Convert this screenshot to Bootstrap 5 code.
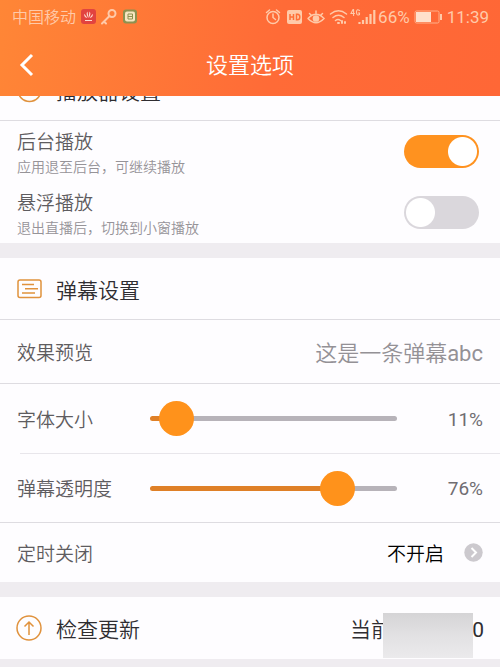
<!DOCTYPE html>
<html lang="zh-CN">
<head>
<meta charset="utf-8">
<meta name="viewport" content="width=device-width, initial-scale=1">
<title>设置选项</title>
<link href="https://cdn.jsdelivr.net/npm/bootstrap@5.3.0/dist/css/bootstrap.min.css" rel="stylesheet">
<style>
body{font-family:Roboto,"Noto Sans CJK SC",sans-serif;font-weight:350;background:#efecf0;color:#5e5c60;overflow-x:hidden}
.topbar{background:linear-gradient(100deg,#ff8636,#ff6b37 55%,#ff6736);color:#fff}
.status{height:34px;padding:0 11px 0 12px;color:#ffcaa9;font-size:16px;line-height:34px}
.status-cn{padding-top:2px}
.status-num{font-size:17px;font-weight:400}
.titlebar{height:62px;padding-top:2px}
.titlebar h1{font-size:22px;font-weight:350;line-height:60px}
.back{width:54px;height:60px}
.panel{background:#fefdff}
.scrolled{margin-top:-37px}
.line-row{padding:0 17px;border-bottom:1px solid #dedce1}
.head-row{height:62px;font-size:20px;color:#2f2d31;gap:14px}
.head-row h2{font-size:21px;font-weight:350;line-height:30px;padding-top:4px}
.opt{height:61px;padding:4px 17px 0}
.opt-name{font-size:19px;line-height:27px;padding-top:1px}
.opt-note{font-size:14px;line-height:23px;color:#969398}
.name{font-size:19px;line-height:28px;padding-top:4px;width:115px}
.preview-row{height:64px}
.preview{font-size:22px;line-height:30px;padding-top:4px;color:#949196}
.latin{font-weight:400}
.slide-row{height:69px;padding:0 17px}
.inset-line{margin-left:20px;height:1px;background:#e8e6eb}
.val{width:68px;font-size:19px;line-height:28px;padding-top:2px;font-weight:400;color:#706d72}
.slider{display:grid;align-items:center}
.slider::before{content:"";grid-area:1/1;height:5px;border-radius:3px;margin:0 18px;background:linear-gradient(90deg,#df8027 var(--v),#b7b3b9 var(--v))}
.slider input{grid-area:1/1;appearance:none;-webkit-appearance:none;background:transparent;width:100%;height:36px;margin:0}
.slider input::-webkit-slider-thumb{-webkit-appearance:none;width:35px;height:35px;border:0;border-radius:50%;background:#ff921b}
.slider input::-moz-range-thumb{width:35px;height:35px;border:0;border-radius:50%;background:#ff921b}
.toggle.form-switch{padding:0;margin:0 4px 4px 0;min-height:0}
.toggle .form-check-input{width:75px;height:33px;margin:0;float:none;display:block;border:0;background-color:#dad7dc;background-size:33px 33px;background-image:radial-gradient(circle,#fff 14px,transparent 15px);background-repeat:no-repeat;background-position:left center}
.toggle .form-check-input:checked{background-color:#ff921f;background-position:right center;background-image:radial-gradient(circle,#fff 14px,transparent 15px)}
.timer-row{height:59px;padding:0 17px}
.timer-val{font-size:19px;font-weight:350;color:#000;gap:20px}
.timer-text{line-height:28px;padding-top:4px}
.gap-band{height:15px}
.ver{font-size:21px;line-height:30px;width:134px;padding-top:4px}
.cover{top:2px;left:33px;right:11px;height:45px;background:linear-gradient(#d5d4d6,#e2e1e3 50%,#ebeaec)}
</style>
<script src="https://cdn.jsdelivr.net/npm/bootstrap@5.3.0/dist/js/bootstrap.bundle.min.js"></script>
</head>
<body>
<header class="topbar position-relative z-1">
  <div class="status d-flex align-items-center justify-content-between">
    <div class="d-flex align-items-center gap-1">
      <span class="status-cn">中国移动</span>
      <svg width="58" height="18" viewBox="0 0 58 18" aria-hidden="true">
        <rect x="1" y="1" width="15" height="15" rx="3" fill="#e2433f"/>
        <g fill="#ffd9cd"><path d="M8 9.500Q5.500 5.500 7.500 3.500L8.400 9.500ZM9 9.500Q11.500 5.500 9.500 3.500L8.600 9.500Z"/><path d="M7.400 10Q3.500 9 4.300 5.700ZM9.600 10Q13.500 9 12.700 5.700Z"/><rect x="5" y="12" width="7" height="1"/></g>
        <g fill="none" stroke="#ffcaa9" stroke-width="2" stroke-linecap="round"><circle cx="32" cy="5.500" r="3.500"/><path d="M29.500 8 22 15.500M24 13.500l2 2"/></g>
        <rect x="43" y="1.500" width="14" height="14" rx="3" fill="#8d9150"/>
        <rect x="45" y="3.500" width="10" height="10" rx="2" fill="#f7e6c2"/>
        <path d="M48 6h4.500v5H48zM48 8.500h4.500" stroke="#8d9150" fill="none"/>
      </svg>
    </div>
    <div class="d-flex align-items-center">
      <svg width="113" height="20" viewBox="0 0 113 20" fill="none" stroke="#ffcaa9" stroke-width="1.500" stroke-linecap="round" aria-hidden="true">
        <circle cx="8" cy="10.500" r="6"/><path d="M8 7V10.500l2.500 2M1.500 5.500 4.500 3M14.500 5.500l-3-2.500"/>
        <rect x="22" y="3" width="15" height="14" rx="2" fill="#ffcaa9" stroke="none"/>
        <path d="M25 7v6M28.500 7v6M25 10h3.500M31.500 7.200v5.600h1q2.300 0 2.300-2.800t-2.300-2.800z" stroke="#ff6f37" stroke-linecap="butt"/>
        <path d="M43 11.500q8-8.500 16 0-8 8.500-16 0M44.500 6.500l2 2M51 4v3M57.500 6.500l-2 2"/><circle cx="51" cy="11.500" r="2.600" fill="#ffcaa9"/>
        <path d="M65.500 7q8-6.500 16 0M68 10.500q5.500-4.500 11 0M70.500 13.500q2.500-2 5 0"/>
        <path d="M73 16h1M77 14v2M80 15v1" stroke-width="2"/>
        <path d="M88 2.500l-2 4h3.500M88.600 2.500v6M94.500 3.500q-2.500-2-3 1v1.500q.5 3 3 1.500V6h-1.200" stroke-width="1.100"/>
        <path d="M94.500 17v-2M98 17v-4M101.700 17v-7M105.500 17V7M109.300 17V3" stroke-width="2.200" stroke-linecap="butt"/>
      </svg>
      <span class="status-num">66%</span>
      <svg class="ms-1 me-1" width="29" height="16" viewBox="0 0 29 16" aria-hidden="true">
        <rect x="1" y="2" width="24" height="12" rx="1.500" fill="none" stroke="#ffb18a"/><rect x="2" y="3" width="15" height="10" fill="#ffe0cb"/><path d="M27 5v6" stroke="#ffcaa9" stroke-width="2"/>
      </svg>
      <span class="status-num">11:39</span>
    </div>
  </div>
  <div class="titlebar d-flex align-items-center">
    <button type="button" class="back btn p-0 border-0" aria-label="返回">
      <svg width="54" height="40" viewBox="0 0 54 40" fill="none" stroke="#fff" stroke-width="3"><path d="M32 9 22 19l10 10"/></svg>
    </button>
    <h1 class="flex-fill text-center m-0">设置选项</h1>
    <div class="back"></div>
  </div>
</header>
<main>
  <section class="panel">
    <div class="scrolled line-row head-row d-flex align-items-center">
      <svg width="25" height="26" viewBox="0 0 25 26" fill="none" stroke="#e0923d" stroke-width="1.500" aria-hidden="true"><circle cx="12.500" cy="13" r="11.500"/><path d="M10 7l6 4-6 4z"/></svg>
      <h2 class="m-0">播放器设置</h2>
    </div>
    <div class="opt d-flex align-items-center justify-content-between">
      <label for="bg"><span class="opt-name d-block">后台播放</span><span class="opt-note d-block">应用退至后台，可继续播放</span></label>
      <div class="toggle form-check form-switch"><input class="form-check-input" type="checkbox" role="switch" id="bg" checked></div>
    </div>
    <div class="opt d-flex align-items-center justify-content-between">
      <label for="float"><span class="opt-name d-block">悬浮播放</span><span class="opt-note d-block">退出直播后，切换到小窗播放</span></label>
      <div class="toggle form-check form-switch"><input class="form-check-input" type="checkbox" role="switch" id="float"></div>
    </div>
  </section>
  <div class="gap-band"></div>
  <section class="panel">
    <div class="line-row head-row d-flex align-items-center">
      <svg width="25" height="20" viewBox="0 0 25 20" fill="none" stroke="#e0923d" stroke-width="1.500" aria-hidden="true"><rect x="1" y="1" width="23" height="17.500" rx="2"/><path d="M5 5.500h12M8 9.800h13M5 14h13"/></svg>
      <h2 class="m-0">弹幕设置</h2>
    </div>
    <div class="line-row preview-row d-flex align-items-center justify-content-between">
      <span class="name">效果预览</span><span class="preview">这是一条弹幕<span class="latin">abc</span></span>
    </div>
    <div class="slide-row d-flex align-items-center">
      <label class="name" for="size">字体大小</label>
      <div class="slider flex-fill" style="--v:11%"><input type="range" id="size" min="0" max="100" value="11"></div>
      <output class="val text-end" for="size">11%</output>
    </div>
    <div class="inset-line"></div>
    <div class="line-row slide-row d-flex align-items-center">
      <label class="name" for="alpha">弹幕透明度</label>
      <div class="slider flex-fill" style="--v:76%"><input type="range" id="alpha" min="0" max="100" value="76"></div>
      <output class="val text-end" for="alpha">76%</output>
    </div>
    <div class="timer-row d-flex align-items-center justify-content-between">
      <span class="name">定时关闭</span>
      <button type="button" class="timer-val btn p-0 border-0 d-flex align-items-center"><span class="timer-text">不开启</span>
        <svg width="19" height="19" viewBox="0 0 19 19" aria-hidden="true"><circle cx="9.500" cy="9.500" r="9.200" fill="#ccc9ce"/><path d="M7.500 5l4.500 4.500L7.500 14" fill="none" stroke="#fff" stroke-width="2"/></svg>
      </button>
    </div>
  </section>
  <div class="gap-band"></div>
  <section class="panel">
    <div class="head-row px-3 d-flex align-items-center">
      <svg width="26" height="26" viewBox="0 0 26 26" fill="none" stroke="#e0923d" stroke-width="1.500" aria-hidden="true"><circle cx="13" cy="13" r="12"/><path d="M13 20V7M8.500 11.500 13 7l4.500 4.500"/></svg>
      <h2 class="m-0">检查更新</h2>
      <div class="ver ms-auto position-relative d-flex justify-content-between"><span>当前</span><span class="latin">0</span><span class="cover position-absolute"></span></div>
    </div>
  </section>
</main>
</body>
</html>
